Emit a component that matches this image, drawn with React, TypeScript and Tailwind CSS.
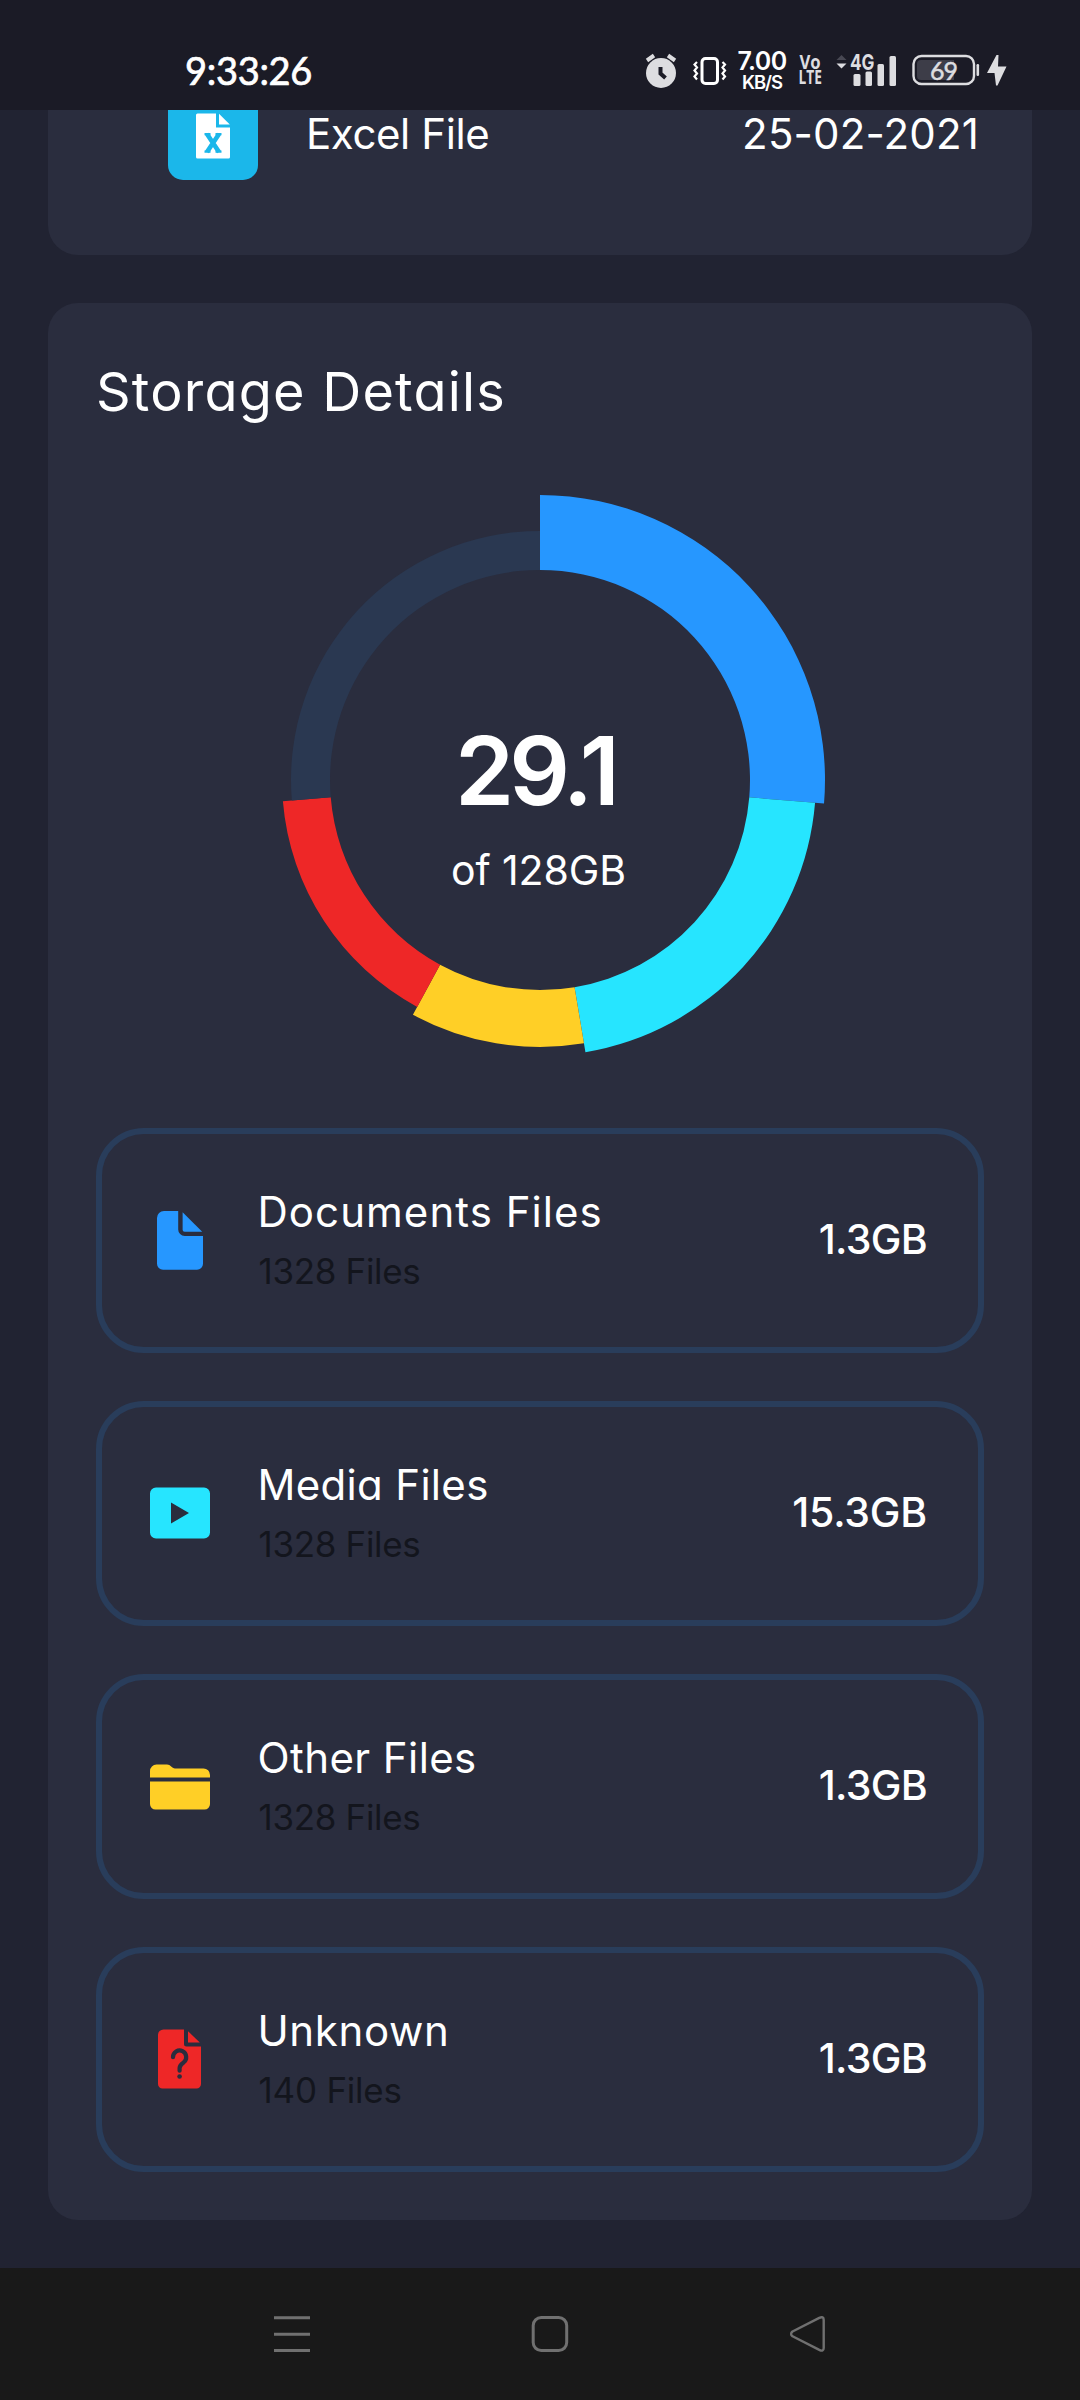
import React from "react";

type Category = {
  title: string;
  count: string;
  size: string;
  titleTracking: string;
  countTracking: string;
  sizeTracking: string;
  icon: React.ReactNode;
};

function DocumentIcon() {
  return (
    <svg className="-mt-px" width="60" height="60" viewBox="0 0 60 60" fill="#2697ff">
      <path d="M14 .9h14.200V19.500a6.500 6.500 0 0 0 6.500 6.500H53v27.800a6 6 0 0 1-6 6H13a6 6 0 0 1-6-6V7.900a7 7 0 0 1 7-7z" />
      <path d="M32.600 2.200L52.200 21.800H34.600a2 2 0 0 1-2-2z" />
    </svg>
  );
}

function MediaIcon() {
  return (
    <svg className="-mt-px" width="60" height="60" viewBox="0 0 60 60" fill="#26e5ff">
      <path
        fillRule="evenodd"
        d="M6 4.500h48a6 6 0 0 1 6 6v39a6 6 0 0 1-6 6H6a6 6 0 0 1-6-6v-39a6 6 0 0 1 6-6zM21 19.500V40.500L39 30z"
      />
    </svg>
  );
}

function FolderIcon() {
  return (
    <svg width="60" height="60" viewBox="0 0 60 60" fill="#ffcf26">
      <path d="M0 20.500V14a6.500 6.500 0 0 1 6.500-6.500H17c3.500 0 5 3.900 8 3.900h28.500a6.500 6.500 0 0 1 6.500 6.500v2.600z" />
      <path d="M0 24.500h60V47a5.500 5.500 0 0 1-5.500 5.500h-49A5.500 5.500 0 0 1 0 47z" />
    </svg>
  );
}

function UnknownIcon() {
  return (
    <svg className="-mt-px" width="60" height="60" viewBox="0 0 60 60" fill="#ee2727">
      <path d="M13.500 .5H34v14.500a2.500 2.500 0 0 0 2.500 2.500H51v37.500a4.500 4.500 0 0 1-4.500 4.500h-34A4.500 4.500 0 0 1 8 55V6a5.500 5.500 0 0 1 5.500-5.500z" />
      <path d="M38 2.200L49.800 13.500H38z" />
      <path
        d="M23 28.200a6.600 6.600 0 1 1 10.600 5.200c-2.500 1.700-4 2.900-4 5.700v2.600"
        fill="none"
        stroke="#2a2d3e"
        strokeWidth="4.200"
        strokeLinecap="round"
      />
      <circle cx="29.600" cy="47.500" r="2.300" fill="#2a2d3e" />
    </svg>
  );
}

function ExcelIcon() {
  return (
    <svg width="36" height="46" viewBox="0 0 36 46" fill="#fff">
      <path d="M2.500 .5H21V14.500H35V44a1.500 1.500 0 0 1-1.500 1.500h-31A1.500 1.500 0 0 1 1 44V2A1.500 1.500 0 0 1 2.500 .5z" />
      <path d="M24 .8L34.800 11.500H24z" />
      <path
        d="M12 21l12 18M24 21L12 39"
        fill="none"
        stroke="#1bb7ea"
        strokeWidth="4.600"
      />
      <path d="M9.500 21.200h6M20.500 21.200h6M9.500 38.700h6M20.500 38.700h6" stroke="#1bb7ea" strokeWidth="2.200" />
    </svg>
  );
}

const categories: Category[] = [
  {
    title: "Documents Files",
    count: "1328 Files",
    size: "1.3GB",
    titleTracking: "tracking-[1.05px]",
    countTracking: "tracking-[-0.33px]",
    sizeTracking: "tracking-[-0.69px]",
    icon: <DocumentIcon />,
  },
  {
    title: "Media Files",
    count: "1328 Files",
    size: "15.3GB",
    titleTracking: "tracking-[0.32px]",
    countTracking: "tracking-[-0.33px]",
    sizeTracking: "tracking-[-0.21px]",
    icon: <MediaIcon />,
  },
  {
    title: "Other Files",
    count: "1328 Files",
    size: "1.3GB",
    titleTracking: "tracking-[0.42px]",
    countTracking: "tracking-[-0.33px]",
    sizeTracking: "tracking-[-0.69px]",
    icon: <FolderIcon />,
  },
  {
    title: "Unknown",
    count: "140 Files",
    size: "1.3GB",
    titleTracking: "tracking-[0.62px]",
    countTracking: "tracking-[-0.22px]",
    sizeTracking: "tracking-[-0.69px]",
    icon: <UnknownIcon />,
  },
];

const slices = [
  { value: 25, width: 75, color: "#2697ff" },
  { value: 20, width: 66, color: "#26e5ff" },
  { value: 10, width: 57, color: "#ffcf26" },
  { value: 15, width: 48, color: "#ee2727" },
  { value: 25, width: 39, color: "#2a3851" },
];

function StorageRing() {
  const inner = 210;
  const total = slices.reduce((sum, s) => sum + s.value, 0);
  let angle = -Math.PI / 2;
  const paths = slices.map((s) => {
    const start = angle;
    const end = start + (s.value / total) * Math.PI * 2;
    angle = end;
    const outer = inner + s.width;
    const pt = (r: number, a: number) =>
      `${(300 + r * Math.cos(a)).toFixed(2)} ${(300 + r * Math.sin(a)).toFixed(2)}`;
    const d = `M${pt(inner, start)}L${pt(outer, start)}A${outer} ${outer} 0 0 1 ${pt(outer, end)}L${pt(inner, end)}A${inner} ${inner} 0 0 0 ${pt(inner, start)}Z`;
    return <path key={s.color} d={d} fill={s.color} />;
  });
  return (
    <div className="relative mx-auto mt-[47px] size-[600px]">
      <svg className="block" width="600" height="600" viewBox="0 0 600 600">
        {paths}
      </svg>
      <div className="absolute inset-0 flex flex-col items-center pt-[236px] text-white">
        <div className="pr-[10px] text-[95px] leading-[110px] font-semibold tracking-[-4.8px]">29.1</div>
        <div className="mt-[14px] pr-[3px] text-[41px] leading-[60px] tracking-[-0.08px]">of 128GB</div>
      </div>
    </div>
  );
}

function CategoryRow({ item }: { item: Category }) {
  return (
    <div className="flex h-[225px] items-center rounded-[48px] border-[6px] border-[#293d5b] pr-[51px] pl-12">
      {item.icon}
      <div className="ml-[47.5px] flex-1">
        <div className={"mb-[2px] text-[42px] leading-[59px] text-white " + item.titleTracking}>{item.title}</div>
        <div className={"pl-[1px] text-[35px] leading-[56px] text-[#13151d] " + item.countTracking}>{item.count}</div>
      </div>
      <div className={"pb-[3px] text-[41px] leading-[60px] font-medium text-white " + item.sizeTracking}>
        {item.size}
      </div>
    </div>
  );
}

function StatusBar() {
  return (
    <header className="flex h-[110px] shrink-0 items-start bg-[#1b1b26] pl-[185px] text-white">
      <div className="mt-[47px] w-[457px] font-['Lato'] text-[38px] leading-[46px] tracking-[-0.3px] [-webkit-text-stroke:0.7px_white]">
        9:33:26
      </div>
      <svg className="mt-[53px] ml-[2px] shrink-0" width="36" height="36" viewBox="0 0 36 36">
        <circle cx="17" cy="20" r="15" fill="#dddde0" />
        <path d="M3 7.500L10 2.500M31 7.500L24 2.500" stroke="#dddde0" strokeWidth="4" />
        <path d="M16.500 14v6.500l5 4.500" fill="none" stroke="#1b1b26" strokeWidth="4" />
      </svg>
      <svg className="mt-[53px] ml-[13px] shrink-0" width="34" height="36" viewBox="0 0 34 36">
        <rect x="9" y="5.500" width="15.500" height="25" rx="3.500" fill="none" stroke="#fff" strokeWidth="3" />
        <path
          d="M4 9l-2.500 2.500 2.500 3-2.500 3 2.500 3-2.500 3 2.500 3M29.500 9l2.500 2.500-2.500 3 2.500 3-2.500 3 2.500 3-2.500 3"
          fill="none"
          stroke="#fff"
          strokeWidth="2.200"
        />
      </svg>
      <div className="mt-[48px] ml-[9px] flex w-[52px] shrink-0 flex-col items-center">
        <span className="text-[25px] leading-[26px] font-semibold tracking-[-0.6px]">7.00</span>
        <span className="text-[18.500px] leading-[17px] font-semibold tracking-[-1.1px]">KB/S</span>
      </div>
      <div className="mt-[55px] ml-[11px] flex w-[23px] shrink-0 flex-col items-center font-['Open_Sans'] font-bold text-[#dddde0]">
        <span className="scale-x-[0.88] text-[19px] leading-[15px]">Vo</span>
        <span className="scale-x-[0.72] text-[19px] leading-[15px]">LTE</span>
      </div>
      <div className="relative mt-[53px] ml-[14px] h-[34px] w-[62px] shrink-0">
        <svg className="block" width="62" height="34" viewBox="0 0 62 34">
          <path d="M.5 7L5.500 2l5 5z" fill="#484853" />
          <path d="M.5 10.500h10l-5 5z" fill="#dddde0" />
          <g fill="#dddde0">
            <rect x="17.500" y="21" width="7" height="12" rx="1.500" />
            <rect x="29.500" y="18.500" width="6.500" height="14.500" rx="1.500" />
            <rect x="41.500" y="11" width="6.500" height="22" rx="1.500" />
            <rect x="53.500" y="3" width="6.500" height="30" rx="1.500" />
          </g>
        </svg>
        <span className="absolute top-0 left-[14px] origin-left scale-x-[0.78] text-[22px] leading-[18px] font-bold text-[#dddde0]">
          4G
        </span>
      </div>
      <div className="relative mt-[54px] ml-[14px] h-[32px] w-[68px] shrink-0">
        <svg className="block" width="68" height="32" viewBox="0 0 68 32">
          <rect x="1.500" y="2" width="60.500" height="28" rx="8" fill="none" stroke="#dddde0" strokeWidth="2.400" />
          <path d="M9 6h33v20H9a4 4 0 0 1-4-4V10a4 4 0 0 1 4-4z" fill="#3d3d48" />
          <rect x="64.500" y="10" width="2.600" height="12" rx="1.200" fill="#dddde0" />
        </svg>
        <span className="absolute inset-y-0 left-[18px] font-['Lato'] text-[25px] leading-[33px] tracking-[-1px] text-[#dddde0] [-webkit-text-stroke:0.5px_#dddde0]">
          69
        </span>
      </div>
      <svg className="mt-[54px] ml-[6px] shrink-0" width="22" height="34" viewBox="0 0 22 34">
        <path d="M10.500 1L1 19h7.500l1.500 12.500h1.500L20.500 12.500H12L12.500 1z" fill="#dddde0" />
      </svg>
    </header>
  );
}

function NavigationBar() {
  return (
    <nav className="flex h-[132px] shrink-0 items-start bg-[#191919] pt-[47px] pl-[273px]">
      <svg width="38" height="40" viewBox="0 0 38 40">
        <path d="M1 2.700h36M1 19.200h36M1 35.500h36" stroke="#707070" strokeWidth="3" />
      </svg>
      <svg className="ml-[220px]" width="38" height="40" viewBox="0 0 38 40">
        <rect x="2.200" y="2.500" width="33.500" height="33" rx="8" fill="none" stroke="#707070" strokeWidth="3" />
      </svg>
      <svg className="ml-[220px]" width="38" height="40" viewBox="0 0 38 40">
        <path
          d="M3.500 16.500L30.300 2.900Q34.700 .9 34.700 5V33Q34.700 37 30.300 34.900L3.500 21.300Q.7 18.900 3.500 16.500z"
          fill="none"
          stroke="#707070"
          strokeWidth="2.400"
          strokeLinejoin="round"
        />
      </svg>
    </nav>
  );
}

export default function App() {
  return (
    <div className="flex h-[2400px] w-[1080px] flex-col overflow-hidden bg-[#212332] font-['Inter',sans-serif] [font-feature-settings:'cv11']">
      <StatusBar />
      <main className="flex-1 overflow-hidden px-12">
        <section className="h-[145px] overflow-hidden rounded-b-[30px] bg-[#2a2d3e] pr-[52px] pl-[120px]">
          <div className="-mt-5 flex h-[90px] items-center text-[42px] leading-[46px] text-white">
            <div className="flex size-[90px] items-center justify-center rounded-[15px] bg-[#1bb7ea] pt-[2px]">
              <ExcelIcon />
            </div>
            <div className="ml-[48px] flex-1 pb-[3px] tracking-[-0.4px]">Excel File</div>
            <div className="pr-px pb-[3px] tracking-[0.16px]">25-02-2021</div>
          </div>
        </section>
        <section className="mt-12 h-[1917px] rounded-[30px] bg-[#2a2d3e] p-12">
          <h2 className="text-[54px] leading-[82px] tracking-[1.22px] text-white">Storage Details</h2>
          <StorageRing />
          <div className="mt-12 flex flex-col gap-12">
            {categories.map((item) => (
              <CategoryRow key={item.title} item={item} />
            ))}
          </div>
        </section>
      </main>
      <NavigationBar />
    </div>
  );
}
